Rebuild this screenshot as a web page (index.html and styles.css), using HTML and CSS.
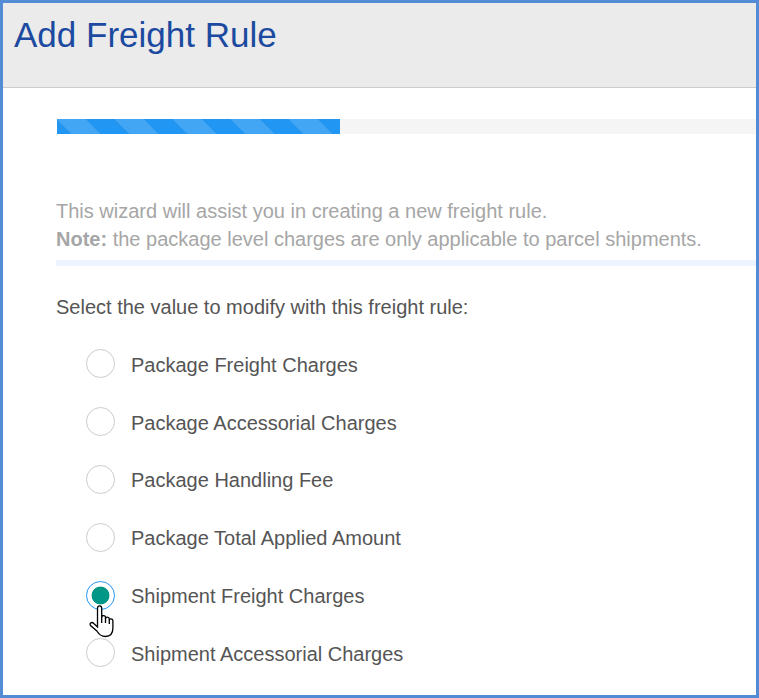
FILE: index.html
```html
<!DOCTYPE html>
<html lang="en">
<head>
<meta charset="utf-8">
<title>Add Freight Rule</title>
<link rel="stylesheet" href="styles.css">
</head>
<body>
<header class="header"><h1 class="title">Add Freight Rule</h1></header>
<main class="content">
  <div class="progress"><div class="bar"></div></div>
  <div class="intro">
    <p><span class="line1">This wizard will assist you in creating a new freight rule.</span></p>
    <p><b>Note:</b> <span class="line2">the package level charges are only applicable to parcel shipments.</span></p>
  </div>
  <p class="question">Select the value to modify with this freight rule:</p>
  <div class="options">
    <label class="option"><span class="radio"></span><span>Package Freight Charges</span></label>
    <label class="option"><span class="radio"></span><span>Package Accessorial Charges</span></label>
    <label class="option"><span class="radio"></span><span>Package Handling Fee</span></label>
    <label class="option"><span class="radio"></span><span>Package Total Applied Amount</span></label>
    <label class="option"><span class="radio selected"></span><span>Shipment Freight Charges</span>
      <svg class="cursor" width="28" height="34" viewBox="0 0 28 34"><path d="M9.5 3.2c0-3 4.2-3 4.2 0v9.3c0-2.5 3.8-2.5 3.8 0v1.2c0-2.3 3.8-2.2 3.8.3v1.2c0-2 3.6-1.8 3.6.6V23c0 5-2.5 8.500-7.500 8.500-4.500 0-6.500-2-8.500-5.500L2.500 20.500c-1.500-2.500 1.500-4 3.300-2L9.500 22z" fill="#fff" stroke="#000" stroke-width="1.300"/><path d="M13.700 12v6M17.500 13v5M21.300 14.500V19" stroke="#000" stroke-width="1.300"/></svg>
    </label>
    <label class="option"><span class="radio"></span><span>Shipment Accessorial Charges</span></label>
  </div>
</main>
</body>
</html>
```
FILE: styles.css
```css
* { box-sizing: border-box; }
body { margin: 0; height: 698px; overflow: hidden; border: 3px solid #538cd5; background: #fff; color: #555; font: 20px/28px "Liberation Sans", Arial, sans-serif; }
p { margin: 0; white-space: nowrap; }
.header { height: 85px; background: #ebebeb; border-bottom: 1px solid #ccc; padding: 11px; }
.title { margin: 0; color: #1b4aa0; font-size: 35px; line-height: 42px; font-weight: 400; }
.content { padding: 31px 0 0 53px; }
.progress { height: 15px; margin-left: 1px; background: #f5f5f5; }
.bar { width: 283px; height: 15px; background: #2196f3 linear-gradient(45deg, rgba(255,255,255,.15) 25%, transparent 25%, transparent 50%, rgba(255,255,255,.15) 50%, rgba(255,255,255,.15) 75%, transparent 75%) 0 0 / 58px 58px; }
.intro { margin-top: 63px; height: 69px; border-bottom: 6px solid #edf3ff; color: #a6a6a6; }
.question { margin-top: 27px; }
.options { margin: 15px 0 0 30px; }
.option { display: flex; align-items: center; height: 57.800px; gap: 16px; position: relative; }
.radio { width: 29px; height: 29px; border: 1px solid #ccc; border-radius: 50%; position: relative; top: -1px; }
.selected { border-color: #2196f3; background: radial-gradient(circle, #009688 8.500px, transparent 9.300px); }
.cursor { position: absolute; left: 2px; top: 38px; z-index: 1; fill: none; }
```
